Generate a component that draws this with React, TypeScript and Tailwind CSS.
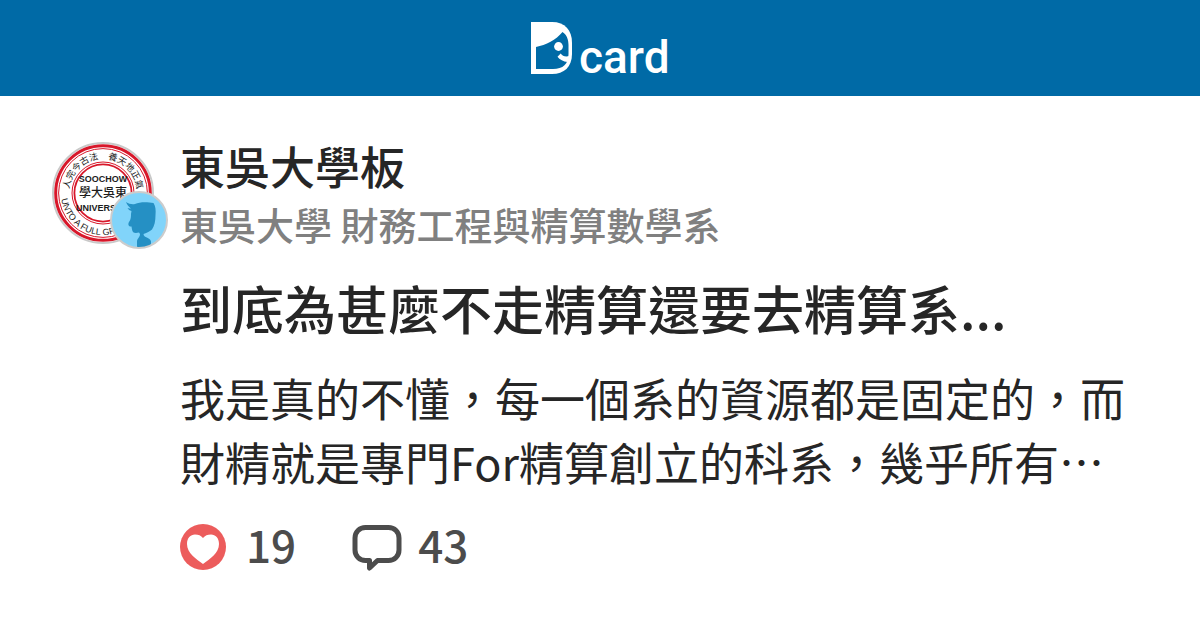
const post = {
  forum: '東吳大學板',
  author: '東吳大學 財務工程與精算數學系',
  title: '到底為甚麼不走精算還要去精算系...',
  excerpt: '我是真的不懂，每一個系的資源都是固定的，而財精就是專門For精算創立的科系，幾乎所有…',
  likes: 19,
  comments: 43,
}

function Logo() {
  return (
    <svg className="overflow-visible" width="144" height="64" viewBox="-1 -6 144 64" role="img" aria-label="Dcard">
      <path d="M2 0H23C36 0 43 8 43 21V32C43 45 35 52 23 52H2Z" fill="#fff" />
      <path d="M7 25C17 23 27 18 33.500 10C38 13 39.500 18 39.500 23V32C39.500 42 34 47 24 47H7Z" fill="#006aa6" />
      <circle cx="29.500" cy="24.500" r="4.400" fill="#fff" />
      <path d="M31.700 31.500C33.500 34 36 35 40.500 34L38.500 40C34.500 39.500 30.500 37.500 28.500 34.700Z" fill="#fff" />
      <text x="50" y="51" fontFamily="Roboto, sans-serif" fontSize="46" fontWeight="500" fill="#fff">
        card
      </text>
    </svg>
  )
}

function ForumSeal() {
  return (
    <svg className="block" width="104" height="104" viewBox="0 0 104 104" aria-hidden="true">
      <defs>
        <path id="motto-zh" d="M17 53A34 34 0 0 1 85 53" />
        <path id="motto-en" d="M9 53A42 42 0 0 0 93 53" />
      </defs>
      <circle cx="51" cy="53" r="50" fill="#fff" stroke="#c9c9c9" strokeWidth="2" />
      <circle cx="51" cy="53" r="47.3" fill="none" stroke="#d8172a" strokeWidth="3" />
      <circle cx="51" cy="53" r="44.4" fill="none" stroke="#d8172a" strokeWidth="1" />
      <circle cx="51" cy="53" r="31" fill="none" stroke="#d8172a" strokeWidth="1" />
      <circle cx="51" cy="53" r="28.6" fill="none" stroke="#d8172a" strokeWidth="1.8" />
      <g fill="#1c1c1c" fontFamily="'Noto Sans CJK TC', sans-serif">
        <text fontSize="9">
          <textPath href="#motto-zh" startOffset="4">人完今古法　養天地正氣</textPath>
        </text>
        <text fontFamily="'Liberation Sans', sans-serif" fontSize="9">
          <textPath href="#motto-en" startOffset="6">UNTO A FULL GROWN MAN</textPath>
        </text>
        <g textAnchor="middle" fontWeight="700">
          <text x="51" y="42" fontFamily="'Liberation Sans', sans-serif" fontSize="9">
            SOOCHOW
          </text>
          <text x="51" y="57" fontSize="12" fontWeight="500">
            學大吳東
          </text>
          <text x="51" y="71" fontFamily="'Liberation Sans', sans-serif" fontSize="9">
            UNIVERSITY
          </text>
        </g>
      </g>
    </svg>
  )
}

function AuthorAvatar() {
  return (
    <svg width="60" height="60" viewBox="0 0 60 60" aria-hidden="true">
      <circle cx="30" cy="30" r="28" fill="#81d4fa" />
      <path
        d="M17 12C20 14 23 14.500 26 14C31 11.500 39 12 44.500 13C46.500 16 47 20 46.500 25C46.500 31 45.500 36 43 39.500C40.500 42 37 43 34.500 44C34.500 48 41 47 42 51.500V55C38 57.500 33 58 28 57.500V51.500C28 48.500 31 47.500 31 44L30 42.500C26 43.500 23.500 43 23 39.500L22.500 36.500C20 37 18.500 34.500 20 32C22 29 22 27 22 24L22.500 21C20.500 20.500 19.500 19.500 18.500 18C20 18.500 21 18.500 22 18.500C20 17 18 15 17 12Z"
        fill="#2590c4"
      />
      <circle cx="30" cy="30" r="28" fill="none" stroke="#ccc" strokeWidth="2" />
    </svg>
  )
}

function LikeIcon() {
  return (
    <svg width="46" height="46" viewBox="0 0 46 46" aria-hidden="true">
      <circle cx="23" cy="23" r="23" fill="#ec5c5c" />
      <path d="M23 40C16 35 7 29 7 20C7 14 10.500 10.500 15 10.500C18.500 10.500 21 11.500 23 14C25 11.500 27.500 10.500 31 10.500C35.500 10.500 39 14 39 20C39 29 30 35 23 40Z" fill="#fff" />
    </svg>
  )
}

function CommentIcon() {
  return (
    <svg width="50" height="48" viewBox="0 0 50 48" aria-hidden="true">
      <path
        d="M13.500 4.500H36.500C42.500 4.500 47 9 47 15V27C47 33 42.500 37.500 36.500 37.500H25.500L17.500 45V37.500H13.500C7.500 37.500 3 33 3 27V15C3 9 7.500 4.500 13.500 4.500Z"
        fill="none"
        stroke="#4c4c4c"
        strokeWidth="5"
        strokeLinejoin="round"
      />
    </svg>
  )
}

export default function App() {
  return (
    <div className="min-h-screen bg-white font-['Noto_Sans_CJK_TC',sans-serif] text-[#262626]" lang="zh-Hant">
      <header className="flex h-24 items-center justify-center bg-[#006aa6]">
        <Logo />
      </header>

      <article className="flex gap-6 pt-11 pr-14 pl-13">
        <div className="relative h-26 w-26 shrink-0">
          <ForumSeal />
          <div className="absolute top-[50px] left-[57px]">
            <AuthorAvatar />
          </div>
        </div>

        <div className="min-w-0 flex-1">
          <p className="text-[45px] leading-13 font-medium">{post.forum}</p>
          <p className="text-[38px] leading-16 font-medium text-[#808080]">{post.author}</p>
          <h1 className="mt-5 text-[52px] leading-16 font-medium">{post.title}</h1>
          <p className="mt-[26px] text-[45px] leading-16">{post.excerpt}</p>

          <div className="mt-[18px] flex gap-14 text-[44px] leading-16 font-medium text-[#4c4c4c]">
            <span className="flex items-center gap-5">
              <LikeIcon />
              <span className="pb-1.5">{post.likes}</span>
            </span>
            <span className="flex items-center gap-4">
              <CommentIcon />
              <span className="pb-1.5">{post.comments}</span>
            </span>
          </div>
        </div>
      </article>
    </div>
  )
}
